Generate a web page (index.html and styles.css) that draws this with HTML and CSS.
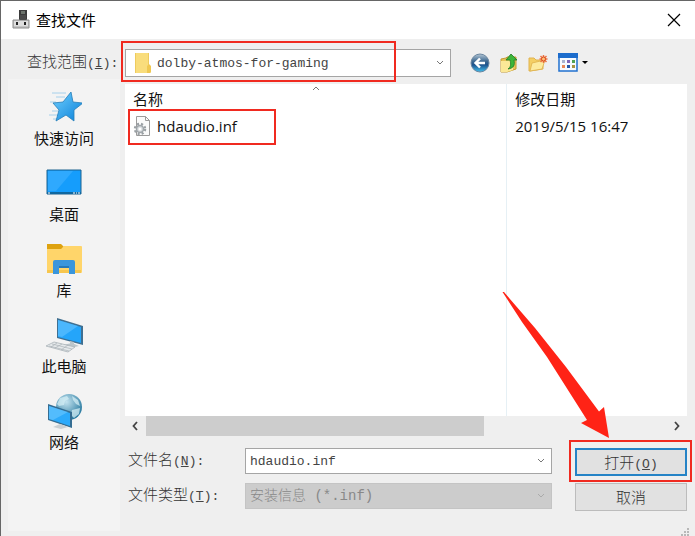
FILE: index.html
```html
<!DOCTYPE html>
<html lang="zh-CN">
<head>
    <title>查找文件</title>
    <meta charset="utf-8">
    <meta name="viewport" content="width=device-width, initial-scale=1">
    <link rel="stylesheet" href="styles.css">
</head>

<body>
<div class="dialog">
    <header class="titlebar">
        <svg class="title-icon" width="18" height="20" viewBox="0 0 18 20">
            <path d="M7 0h8v11H7z" fill="#3b3b3b"/>
            <path d="M9 1h4v3H9z" fill="#6c736c"/>
            <path d="M1 10h16v8H1z" fill="#c4c4c4" stroke="#8c8c8c"/>
            <path d="M8 5h6v5H8z" fill="#4a4a4a"/>
            <path d="M2 11h14v5H2z" fill="#dedede"/>
            <path d="M4 12h2v3H4zM12 12h2v3h-2z" fill="#222"/>
        </svg>
        <h1>查找文件</h1>
        <button class="close" aria-label="关闭">
            <svg width="14" height="14" viewBox="0 0 14 14"><path d="M1 1l12 12M13 1L1 13" stroke="#000" stroke-width="1.2"/></svg>
        </button>
    </header>

    <!-- Look in -->
    <div class="lookin">
        <label class="song" for="folder">查找范围<span class="mono">(<u>I</u>):</span></label>
        <div class="combo folder-combo">
            <svg class="folder-icon" width="17" height="20" viewBox="0 0 17 20">
                <path d="M1 0h14v13l2 2v4l-1 1H1z" fill="#f9dd7c"/>
                <path d="M1 0h1v20H1zM15 0v12h-1V0z" fill="#eecb5e"/>
                <path d="M13 20v-7l2-2 2 2v6l-1 1z" fill="#efc852"/>
            </svg>
            <select id="folder" class="mono">
                <option>dolby-atmos-for-gaming</option>
            </select>
            <svg class="chevron" width="8" height="6" viewBox="0 0 8 6"><path d="M1 1l3 3 3-3" fill="none" stroke="#777"/></svg>
            <span class="mark mark-folder"></span>
        </div>
        <div class="tools">
            <button aria-label="返回">
                <svg width="20" height="20" viewBox="0 0 20 20">
                    <defs>
                        <linearGradient id="ball" x1="0" y1="0" x2="0" y2="1">
                            <stop offset="0" stop-color="#b4c6d4"/>
                            <stop offset=".4" stop-color="#3f6a92"/>
                            <stop offset=".6" stop-color="#1d528c"/>
                            <stop offset="1" stop-color="#43c0ee"/>
                        </linearGradient>
                    </defs>
                    <circle cx="10" cy="10" r="9" fill="url(#ball)" stroke="#6a86a0"/>
                    <path d="M15 10H6M10 5.500l-4.500 4.500 4.500 4.500" fill="none" stroke="#fff" stroke-width="2.400"/>
                </svg>
            </button>
            <button aria-label="向上一级">
                <svg width="18" height="20" viewBox="0 0 18 20">
                    <path d="M1 6l5-1 1-1h9v12l-9 3H1z" fill="#e7c35a" stroke="#c49a35"/>
                    <path d="M1 8h7l5-2v11l-6 2H1z" fill="#fbe897"/>
                    <path d="M8 16c3-2 3-5 2-9H6l5-6 6 6h-3c1 5 0 8-6 9z" fill="#3cb63a" stroke="#207b25" stroke-width=".8"/>
                </svg>
            </button>
            <button aria-label="新建文件夹">
                <svg width="20" height="20" viewBox="0 0 20 20">
                    <path d="M1 5h5l2 2h7v9L2 18H1z" fill="#f4cf64" stroke="#e0b350"/>
                    <path d="M4 10l13-3-3 9-12 2z" fill="#fdeb9e" stroke="#deb14b" stroke-width=".8"/>
                    <path d="M15.500 2v8M11.500 6h8M12.500 3l6 6M18.500 3l-6 6" stroke="#ee7445" stroke-width="1.500"/>
                    <circle cx="15.500" cy="6" r="2" fill="#ffc27a" stroke="#d94c20"/>
                </svg>
            </button>
            <button class="view" aria-label="查看菜单">
                <svg width="30" height="20" viewBox="0 0 30 20">
                    <path d="M1 1h18v17H1z" fill="#f7fbff" stroke="#2272cf" stroke-width="1.500"/>
                    <path d="M0 0h20v5H0z" fill="#1c6ccc"/>
                    <path d="M4 7h3v3H4z" fill="#a9b4cf"/><path d="M9 7h3v3H9z" fill="#8068b8"/><path d="M14 7h3v3h-3z" fill="#52a352"/>
                    <path d="M4 12h3v3H4z" fill="#e98958"/><path d="M9 12h3v3H9z" fill="#2559a8"/><path d="M14 12h3v3h-3z" fill="#a79442"/>
                    <path d="M24 8h6l-3 3z" fill="#000"/>
                </svg>
            </button>
        </div>
    </div>

    <div class="content">
        <nav class="places">
            <a href="#quick">
                <svg width="36" height="36" viewBox="0 0 36 36">
                    <defs>
                        <linearGradient id="star" x1="0" y1="0" x2="1" y2="1">
                            <stop offset="0" stop-color="#70d0ff"/>
                            <stop offset="1" stop-color="#087fd8"/>
                        </linearGradient>
                    </defs>
                    <path d="M6 4h14M10 8h9M4 13h6M6 22h6M3 26h9M7 30h4" stroke="#93c7e8" stroke-width=".8"/>
                    <path d="M25 3l2 10 10 1-9 7 0 11-8-6-10 6 3-11-6-7 10-1z" fill="url(#star)" stroke="#247db9" stroke-width=".8" stroke-linejoin="round"/>
                </svg>
                <span>快速访问</span>
            </a>
            <a href="#desktop">
                <svg width="36" height="36" viewBox="0 0 36 36">
                    <path d="M1 5h34v24H1z" fill="#159dfc" stroke="#1c638f"/>
                    <path d="M2 6h25L10 26H2z" fill="#41b0ff" opacity=".6"/>
                    <path d="M1 27h34v2H1z" fill="#10679f"/>
                    <path d="M2 28h2M27 28h2M30 28h1M32 28h2" stroke="#fff" stroke-width="1.200"/>
                </svg>
                <span>桌面</span>
            </a>
            <a href="#library">
                <svg width="36" height="36" viewBox="0 0 36 36">
                    <path d="M1 3h14l3 3-3 4H1z" fill="#dea20f"/>
                    <path d="M1 8h14l3-3h17a1 1 0 0 1 1 1v25a1 1 0 0 1-1 1H1z" fill="#ffd56a"/>
                    <path d="M1 29h34v3H1z" fill="#f7c64d"/>
                    <path d="M7 33V21q0-2 2-2h18q2 0 2 2v12h-6v-8H13v8z" fill="#3a96dc"/>
                    <path d="M13 25h10v2H13z" fill="#2779b8"/>
                </svg>
                <span>库</span>
            </a>
            <a href="#computer">
                <svg width="40" height="36" viewBox="0 0 40 36">
                    <path d="M13 1l26 8v19l-26-7z" fill="#3f6f91"/>
                    <path d="M14 3l23 7v16l-23-6z" fill="#24a5fa"/>
                    <path d="M14 3l20 6-16 11-4-1z" fill="#61c0ff" opacity=".65"/>
                    <path d="M26 24l4 1v3l-4-1zM19 28l9-2 7 3-9 2z" fill="#bcc6cb"/>
                    <path d="M2 29l8-4 21 5-7 5z" fill="#e5e9eb" stroke="#a9b2b7" stroke-width=".8"/>
                    <path d="M5 29l20 5M8 27l20 5M11 31l7-4M17 33l7-5M7 30l6-4" stroke="#aab2b7" stroke-width=".7"/>
                </svg>
                <span>此电脑</span>
            </a>
            <a href="#network">
                <svg width="36" height="36" viewBox="0 0 36 36">
                    <defs>
                        <radialGradient id="globe" cx=".4" cy=".3" r=".7">
                            <stop offset="0" stop-color="#c3e3ef"/>
                            <stop offset="1" stop-color="#28799f"/>
                        </radialGradient>
                    </defs>
                    <circle cx="23" cy="14" r="13" fill="url(#globe)"/>
                    <path d="M14 5l7-2 2 3-4 2-1 4-5 1-2-2zM26 3l6 4 2 6-4-2-3-4zM26 17l8-2-1 6-5 4-3-3z" fill="#d3edf4" opacity=".75"/>
                    <path d="M2 11l24 8v16L2 27z" fill="#346d92"/>
                    <path d="M3 13l21 7v13L3 26z" fill="#2caafb"/>
                    <path d="M3 13l19 6L7 27l-4-1z" fill="#6ec8ff" opacity=".6"/>
                    <path d="M7 34l7-3 8 3-7 2z" fill="#cbd0d3"/>
                </svg>
                <span>网络</span>
            </a>
        </nav>

        <main class="pane">
            <div class="files">
                <svg class="sort" width="8" height="5" viewBox="0 0 8 5"><path d="M1 4l3-3 3 3" fill="none" stroke="#777"/></svg>
                <table>
                    <thead>
                        <tr><th class="name">名称</th><th>修改日期</th></tr>
                    </thead>
                    <tbody>
                        <tr>
                            <td class="name">
                                <div class="file">
                                    <svg width="18" height="20" viewBox="0 0 18 20">
                                        <path d="M3.500.500h9l4 4v15h-13z" fill="#fafafa" stroke="#9b9b9b"/>
                                        <path d="M12.500.500v4h4" fill="none" stroke="#9b9b9b"/>
                                        <circle cx="7" cy="13" r="5" fill="none" stroke="#9aa0a4" stroke-width="2.500" stroke-dasharray="2 2"/>
                                        <circle cx="7" cy="13" r="3.500" fill="#d6dadd" stroke="#a0a6aa" stroke-width="1.500"/>
                                        <circle cx="7" cy="13" r="1.500" fill="#fff"/>
                                    </svg>
                                    hdaudio.inf
                                </div>
                            </td>
                            <td>2019/5/15 16:47</td>
                        </tr>
                    </tbody>
                </table>
                <span class="mark mark-file"></span>
            </div>

            <div class="scrollbar">
                <button aria-label="向左滚动"><svg width="7" height="10" viewBox="0 0 7 10"><path d="M5 1L1.500 5 5 9" fill="none" stroke="#444" stroke-width="1.800"/></svg></button>
                <div class="track"><div class="thumb"></div></div>
                <button aria-label="向右滚动"><svg width="7" height="10" viewBox="0 0 7 10"><path d="M2 1l3.500 4L2 9" fill="none" stroke="#444" stroke-width="1.800"/></svg></button>
            </div>

            <form class="fields">
                <label class="song" for="filename">文件名<span class="mono">(<u>N</u>):</span></label>
                <div class="combo">
                    <input id="filename" class="mono" type="text" value="hdaudio.inf">
                    <svg class="chevron" width="8" height="6" viewBox="0 0 8 6"><path d="M1 1l3 3 3-3" fill="none" stroke="#777"/></svg>
                </div>
                <div class="open-wrap">
                    <button type="button" class="open song">打开<span class="mono">(<u>O</u>)</span></button>
                    <span class="mark mark-open"></span>
                    <svg class="arrow" width="112" height="150" viewBox="0 0 112 150">
                        <path d="M2.500 2L4 2 35 38 66 77 99 121.500 104 117l5 31-28-15 6-3L47 67 22 32z" fill="#ff2316"/>
                    </svg>
                </div>

                <label class="song" for="filetype">文件类型<span class="mono">(<u>T</u>):</span></label>
                <div class="combo">
                    <select id="filetype" class="song" disabled>
                        <option>安装信息 (*.inf)</option>
                    </select>
                    <svg class="chevron" width="8" height="6" viewBox="0 0 8 6"><path d="M1 1l3 3 3-3" fill="none" stroke="#aaa"/></svg>
                </div>
                <button type="button" class="song">取消</button>
            </form>
        </main>
    </div>

    <svg class="grip" width="8" height="8" viewBox="0 0 8 8"><path d="M6 0h2v2H6zM3 3h2v2H3zM6 3h2v2H6zM0 6h2v2H0zM3 6h2v2H3zM6 6h2v2H6z" fill="#b8b8b8"/></svg>
</div>
</body>
</html>
```

FILE: styles.css
```css
* {
    box-sizing: border-box;
}

body {
    margin: 0;
    background: #efefef;
    color: #111;
    font-family: "Open Sans", "Noto Sans CJK SC", sans-serif;
    font-size: 15px;
}

button, input, select {
    margin: 0;
    font-size: 15px;
    color: #444;
    border-radius: 0;
}

svg {
    display: block;
    flex: none;
}

.song {
    font-family: "Liberation Mono", "Noto Sans CJK SC", monospace;
    font-weight: 300;
    color: #333;
}

.mono {
    font-family: "Liberation Mono", monospace;
    font-size: 13px;
    color: #444;
}

.dialog {
    position: relative;
    display: flex;
    flex-direction: column;
    min-height: 100vh;
    border-top: 1px solid #666;
    border-left: 1px solid #666;
}

/* Title bar */
.titlebar {
    display: flex;
    align-items: center;
    gap: 6px;
    height: 38px;
    padding: 0 14px 0 11px;
    background: #fff;
}

.titlebar h1 {
    flex: 1;
    margin: 0;
    padding-bottom: 2px;
    font-size: 15px;
    font-weight: normal;
    color: #000;
}

.close {
    padding: 0;
    border: 0;
    background: none;
}

/* Look in row */
.lookin {
    display: flex;
    align-items: center;
    height: 40px;
    padding: 8px 107px 0 26px;
}

.lookin label {
    width: 98px;
    padding-bottom: 5px;
    white-space: nowrap;
}

.combo {
    position: relative;
}

.combo input,
.combo select {
    display: block;
    width: 100%;
    height: 26px;
    padding: 0 20px 0 4px;
    border: 1px solid #a5a5a5;
    background: #fff;
    appearance: none;
    outline: none;
}

.combo select:disabled {
    border-color: #c4c4c4;
    background: #ccc;
    color: #888;
    font-size: 14px;
    opacity: 1;
}

.folder-combo {
    flex: 1;
}

.folder-combo select {
    height: 28px;
    padding-left: 31px;
}

.folder-icon {
    position: absolute;
    top: 4px;
    left: 9px;
}

.chevron {
    position: absolute;
    top: 50%;
    right: 7px;
    margin-top: -3px;
}

.tools {
    display: flex;
    align-items: center;
    gap: 10px;
    margin-left: 19px;
}

.tools button {
    padding: 0;
    border: 0;
    background: none;
}

/* Places bar + file pane */
.content {
    flex: 1;
    display: flex;
    padding: 0 8px 5px 7px;
}

.places {
    display: flex;
    flex-direction: column;
    gap: 18px;
    flex: 0 0 112px;
    padding-top: 10px;
    background: #f3f3f3;
}

.places a {
    display: flex;
    flex-direction: column;
    align-items: center;
    gap: 4px;
    color: #111;
    line-height: 18px;
    text-decoration: none;
}

.pane {
    flex: 1;
    display: flex;
    flex-direction: column;
    min-width: 0;
    padding: 5px 0 0 5px;
}

.files {
    position: relative;
    flex: 1;
    background: linear-gradient(#e6f0f5, #e6f0f5) 68% 0 / 1px 100% no-repeat #fff;
}

.files table {
    width: 100%;
    border-collapse: collapse;
    table-layout: fixed;
}

.files th,
.files td {
    height: 24px;
    padding: 0 8px;
    font-weight: normal;
    line-height: 20px;
    text-align: left;
}

.files th {
    height: 30px;
}

.files .name {
    width: 68%;
}

.file {
    display: flex;
    align-items: center;
    gap: 6px;
}

.sort {
    position: absolute;
    top: 2px;
    left: 34%;
    margin-left: -4px;
}

.scrollbar {
    display: flex;
    height: 20px;
}

.scrollbar button {
    display: flex;
    align-items: center;
    justify-content: center;
    width: 21px;
    padding: 0;
    border: 0;
    background: none;
}

.track {
    flex: 1;
}

.thumb {
    width: 65%;
    height: 100%;
    background: #cdcdcd;
}

/* File name, file type, buttons */
.fields {
    display: grid;
    grid-template-columns: 117px 1fr 112px;
    grid-auto-rows: 28px;
    row-gap: 7px;
    align-items: start;
    padding: 12px 0 20px 3px;
}

.fields label {
    line-height: 28px;
}

.fields .combo {
    margin-right: 23px;
}

.fields button {
    width: 100%;
    height: 28px;
    padding: 0;
    border: 1px solid #bcbcbc;
    background: #e1e1e1;
}

.fields .open {
    border: 2px solid #2583c6;
}

.open-wrap {
    position: relative;
    height: 28px;
}

/* Red highlights */
.mark {
    position: absolute;
    border: 2px solid #f02a20;
    pointer-events: none;
}

.mark-folder {
    top: -8px;
    left: -4px;
    width: 275px;
    height: 41px;
}

.mark-file {
    top: 25px;
    left: 3px;
    width: 148px;
    height: 36px;
}

.mark-open {
    top: -8px;
    right: -5px;
    bottom: -6px;
    left: -6px;
}

.arrow {
    position: absolute;
    top: -158px;
    left: -75px;
    pointer-events: none;
}

.grip {
    position: absolute;
    right: 6px;
    bottom: 0;
}
```
